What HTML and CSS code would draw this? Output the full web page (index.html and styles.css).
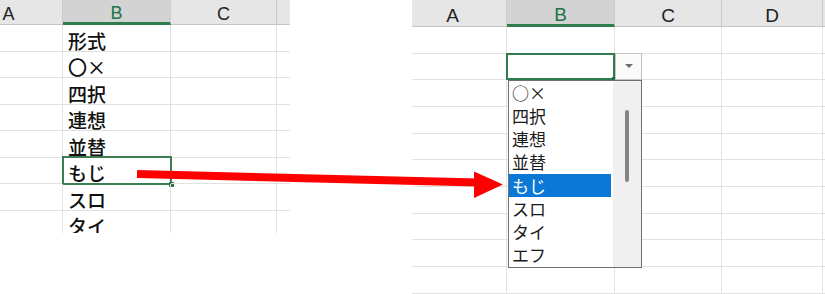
FILE: index.html
```html
<!DOCTYPE html>
<html lang="ja">
<head>
<meta charset="utf-8">
<link rel="stylesheet" href="styles.css">
</head>
<body>
<div class="page">
  <section class="sheet sheet-a">
    <div class="grid grid-a">
      <div class="hd">A</div><div class="hd sel">B</div><div class="hd">C</div><div class="hd"></div>
      <div class="c"></div><div class="c t">形式</div><div class="c"></div><div class="c"></div>
      <div class="c"></div><div class="c t">〇×</div><div class="c"></div><div class="c"></div>
      <div class="c"></div><div class="c t">四択</div><div class="c"></div><div class="c"></div>
      <div class="c"></div><div class="c t">連想</div><div class="c"></div><div class="c"></div>
      <div class="c"></div><div class="c t">並替</div><div class="c"></div><div class="c"></div>
      <div class="c"></div><div class="c t active">もじ</div><div class="c"></div><div class="c"></div>
      <div class="c"></div><div class="c t">スロ</div><div class="c"></div><div class="c"></div>
      <div class="c"></div><div class="c t">タイ</div><div class="c"></div><div class="c"></div>
      <div class="c"></div><div class="c t"></div><div class="c"></div><div class="c"></div>
    </div>
  </section>

  <section class="sheet sheet-b">
    <div class="grid grid-b">
      <div class="hd">A</div><div class="hd sel">B</div><div class="hd">C</div><div class="hd">D</div><div class="hd"></div>
      <div class="c"></div><div class="c"></div><div class="c"></div><div class="c"></div><div class="c"></div>
      <div class="c"></div>
      <div class="c active2">
        <div class="dd-btn"><span class="tri"></span></div>
        <div class="dd-list">
          <div class="dd-items">
            <div class="it">○×</div>
            <div class="it">四択</div>
            <div class="it">連想</div>
            <div class="it">並替</div>
            <div class="it hl">もじ</div>
            <div class="it">スロ</div>
            <div class="it">タイ</div>
            <div class="it">エフ</div>
          </div>
          <div class="dd-scroll"><span class="thumb"></span></div>
        </div>
      </div>
      <div class="c"></div><div class="c"></div><div class="c"></div>
      <div class="c"></div><div class="c"></div><div class="c"></div><div class="c"></div><div class="c"></div>
      <div class="c"></div><div class="c"></div><div class="c"></div><div class="c"></div><div class="c"></div>
      <div class="c"></div><div class="c"></div><div class="c"></div><div class="c"></div><div class="c"></div>
      <div class="c"></div><div class="c"></div><div class="c"></div><div class="c"></div><div class="c"></div>
      <div class="c"></div><div class="c"></div><div class="c"></div><div class="c"></div><div class="c"></div>
      <div class="c"></div><div class="c"></div><div class="c"></div><div class="c"></div><div class="c"></div>
      <div class="c"></div><div class="c"></div><div class="c"></div><div class="c"></div><div class="c"></div>
      <div class="c"></div><div class="c"></div><div class="c"></div><div class="c"></div><div class="c"></div>
      <div class="c"></div><div class="c"></div><div class="c"></div><div class="c"></div><div class="c"></div>
    </div>
  </section>

  <svg class="arrow" width="825" height="294" viewBox="0 0 825 294">
    <line x1="137" y1="174" x2="478" y2="182.5" stroke="#ff0000" stroke-width="8"/>
    <polygon points="474,171.5 503,184.5 474,198" fill="#ff0000"/>
  </svg>
</div>
</body>
</html>
```

FILE: styles.css
```css
* { box-sizing: border-box; }
html, body { margin: 0; padding: 0; background: #fff; }
body { width: 825px; height: 294px; overflow: hidden; }

.page {
  position: relative;
  display: flex;
  align-items: flex-start;
  width: 825px;
  height: 294px;
}

.sheet { overflow: hidden; background: #fff; }
.sheet-a { width: 290px; height: 233px; }
.sheet-b { width: 413px; height: 294px; margin-left: 122px; }

.grid { display: grid; }
.grid-a {
  grid-template-columns: 108px 108px 106px 108px;
  grid-template-rows: 25px repeat(9, 26.5px);
  margin-left: -45px;
}
.grid-b {
  grid-template-columns: 108px 108px 107px 101px 108px;
  grid-template-rows: 27px repeat(10, 26.67px);
  margin-left: -13px;
}

.hd {
  background: #e6e6e6;
  border-right: 1px solid #cbcbcb;
  border-bottom: 1px solid #c4c4c4;
  font-family: "Liberation Sans", Arial, sans-serif;
  font-size: 18px;
  color: #222;
  display: flex;
  align-items: center;
  justify-content: center;
}
.grid-a .hd { padding-top: 4px; }
.grid-b .hd { padding-top: 6px; font-size: 19px; }
.hd.sel {
  background: #d3d3d3;
  color: #217346;
  border-bottom: 3px solid #2f7d4f;
}

.c {
  border-right: 1px solid #e2e2e2;
  border-bottom: 1px solid #e2e2e2;
  position: relative;
}
.t {
  font-family: "Noto Sans CJK JP", sans-serif;
  font-size: 19px;
  font-weight: 500;
  line-height: 1;
  color: #111;
  display: flex;
  align-items: flex-end;
  padding-left: 5px;
  padding-bottom: 1px;
}

.active::before {
  content: "";
  position: absolute;
  left: -1px; right: -2px; top: -2px; bottom: -2px;
  border: 2px solid #3c7d52;
}
.active::after {
  content: "";
  position: absolute;
  right: -4px; bottom: -4px;
  width: 5px; height: 5px;
  background: #2f7449;
}

.active2::before {
  content: "";
  position: absolute;
  left: -1px; right: -1px; top: -1px; bottom: -1px;
  border: 2px solid #2f7d4f;
}
.active2::after {
  content: "";
  position: absolute;
  right: -2px; bottom: -2px;
  width: 4px; height: 4px;
  background: #1e6b3f;
}

.dd-btn {
  position: absolute;
  left: 108px;
  top: -1px;
  width: 27px;
  height: 27px;
  background: #fafafa;
  border: 1px solid #c3c3c3;
  display: flex;
  align-items: center;
  justify-content: center;
  z-index: 2;
}
.tri {
  width: 0; height: 0;
  border-left: 4px solid transparent;
  border-right: 4px solid transparent;
  border-top: 4px solid #6e6e6e;
}

.dd-list {
  position: absolute;
  left: 1px;
  top: 26px;
  width: 134px;
  height: 188px;
  background: #fff;
  border: 1px solid #6f6f6f;
  display: flex;
  z-index: 3;
}
.dd-items { width: 102px; display: flex; flex-direction: column; }
.it {
  height: 23.25px;
  line-height: 23.25px;
  padding-left: 3px;
  font-family: "Noto Sans CJK JP", sans-serif;
  font-size: 17px;
  color: #1a1a1a;
  white-space: nowrap;
}
.it.hl { background: #0a78d4; color: #fff; }
.dd-scroll {
  flex: 1;
  margin-left: 2px;
  background: #f0f0f0;
  position: relative;
}
.thumb {
  position: absolute;
  left: 12px;
  top: 29px;
  width: 4px;
  height: 72px;
  border-radius: 2px;
  background: #858585;
}

.arrow {
  position: absolute;
  left: 0;
  top: 0;
  z-index: 10;
  pointer-events: none;
}
```
